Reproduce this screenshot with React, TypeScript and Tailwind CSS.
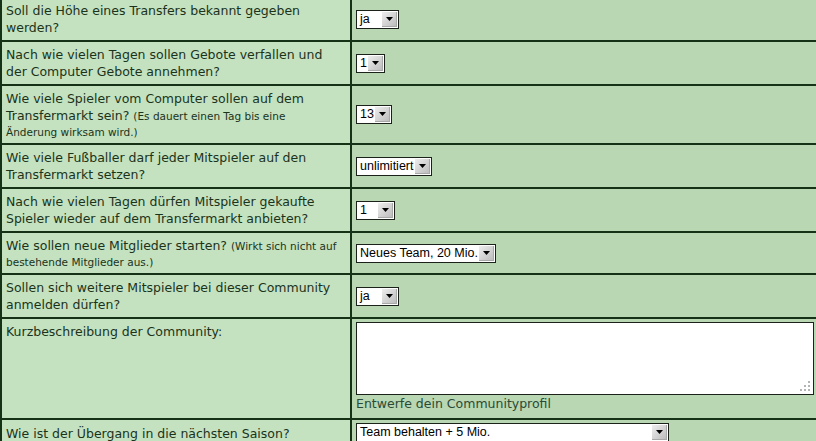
import React from "react";

const FONT = { fontFamily: '"DejaVu Sans", Verdana, sans-serif' };
const SELFONT = { fontFamily: '"Liberation Sans", Arial, sans-serif' };

function Sel({ text, className }: { text: string; className: string }) {
  return (
    <div className={"flex h-[19px] border border-[#1a221a] bg-white " + className}>
      <div
        className="flex-1 overflow-hidden whitespace-nowrap pl-[3px] text-[12.5px] leading-[17px] text-black"
        style={SELFONT}
      >
        {text}
      </div>
      <div className="m-[1px] flex h-[15px] w-[15px] shrink-0 items-center justify-center border-r border-b border-[#a8a8a8] bg-linear-to-br from-[#eeeeee] to-[#bdbdbd]">
        <svg width="7" height="4" viewBox="0 0 7 4">
          <path d="M0 0h7L3.5 4z" fill="#000" />
        </svg>
      </div>
    </div>
  );
}

function Left({
  children,
  top = false,
}: {
  children: React.ReactNode;
  top?: boolean;
}) {
  return (
    <div
      className={
        "flex border-r-2 border-b-2 border-[#163216] bg-[#c4e2c0] px-[4px] py-[4px] text-[12.5px] leading-[17px] text-[#1b331b] whitespace-nowrap " +
        (top ? "items-start" : "items-center")
      }
      style={FONT}
    >
      <div>{children}</div>
    </div>
  );
}

function Right({ children }: { children: React.ReactNode }) {
  return (
    <div className="flex items-center border-b-2 border-[#163216] bg-[#b9d7b2] px-[4px] py-[4px]">
      {children}
    </div>
  );
}

export default function App() {
  return (
    <div className="h-[441px] w-[816px] overflow-hidden bg-[#b9d7b2]">
      <div className="-mt-[2px] grid grid-cols-[350px_1fr] border-l-2 border-[#163216]">
        <Left>
          Soll die Höhe eines Transfers bekannt gegeben
          <br />
          werden?
        </Left>
        <Right>
          <Sel text="ja" className="w-[43px]" />
        </Right>

        <Left>
          Nach wie vielen Tagen sollen Gebote verfallen und
          <br />
          der Computer Gebote annehmen?
        </Left>
        <Right>
          <Sel text="1" className="w-[29px]" />
        </Right>

        <Left>
          <div>
            Wie viele Spieler vom Computer sollen auf dem
            <br />
            Transfermarkt sein?{" "}
            <span className="text-[10.5px]">(Es dauert einen Tag bis eine</span>
          </div>
          <div className="text-[10.5px] leading-[14px]">Änderung wirksam wird.)</div>
        </Left>
        <Right>
          <Sel text="13" className="w-[36px]" />
        </Right>

        <Left>
          Wie viele Fußballer darf jeder Mitspieler auf den
          <br />
          Transfermarkt setzen?
        </Left>
        <Right>
          <Sel text="unlimitiert" className="w-[76px]" />
        </Right>

        <Left>
          Nach wie vielen Tagen dürfen Mitspieler gekaufte
          <br />
          Spieler wieder auf dem Transfermarkt anbieten?
        </Left>
        <Right>
          <Sel text="1" className="w-[39px]" />
        </Right>

        <Left>
          <div>
            Wie sollen neue Mitglieder starten?{" "}
            <span className="text-[10.5px]">(Wirkt sich nicht auf</span>
          </div>
          <div className="text-[10.5px] leading-[14px]">bestehende Mitglieder aus.)</div>
        </Left>
        <Right>
          <Sel text="Neues Team, 20 Mio." className="w-[140px]" />
        </Right>

        <Left>
          Sollen sich weitere Mitspieler bei dieser Community
          <br />
          anmelden dürfen?
        </Left>
        <Right>
          <Sel text="ja" className="w-[43px]" />
        </Right>

        <Left top>Kurzbeschreibung der Community:</Left>
        <div className="flex flex-col border-b-2 border-[#163216] bg-[#b9d7b2] px-[4px] pt-[3px] pb-[6px]">
          <div className="relative h-[73px] w-[458px] border border-[#1a221a] bg-white">
            <svg
              className="absolute right-[2px] bottom-[2px]"
              width="11"
              height="11"
              viewBox="0 0 11 11"
            >
              <rect x="8" y="0" width="2" height="2" fill="#b4b4b4" />
              <rect x="4" y="4" width="2" height="2" fill="#b4b4b4" />
              <rect x="8" y="4" width="2" height="2" fill="#b4b4b4" />
              <rect x="0" y="8" width="2" height="2" fill="#b4b4b4" />
              <rect x="4" y="8" width="2" height="2" fill="#b4b4b4" />
              <rect x="8" y="8" width="2" height="2" fill="#b4b4b4" />
            </svg>
          </div>
          <div
            className="text-[12.5px] leading-[17px] text-[#294a36]"
            style={FONT}
          >
            Entwerfe dein Communityprofil
          </div>
        </div>

        <div
          className="flex items-start border-r-2 border-b-2 border-[#163216] bg-[#c4e2c0] px-[4px] pt-[5px] pb-[4px] text-[12.5px] leading-[17px] text-[#1b331b] whitespace-nowrap"
          style={FONT}
        >
          Wie ist der Übergang in die nächsten Saison?
        </div>
        <div className="flex items-start border-b-2 border-[#163216] bg-[#b9d7b2] px-[4px] pt-[3px] pb-[4px]">
          <Sel text="Team behalten + 5 Mio." className="w-[313px]" />
        </div>
      </div>
    </div>
  );
}
